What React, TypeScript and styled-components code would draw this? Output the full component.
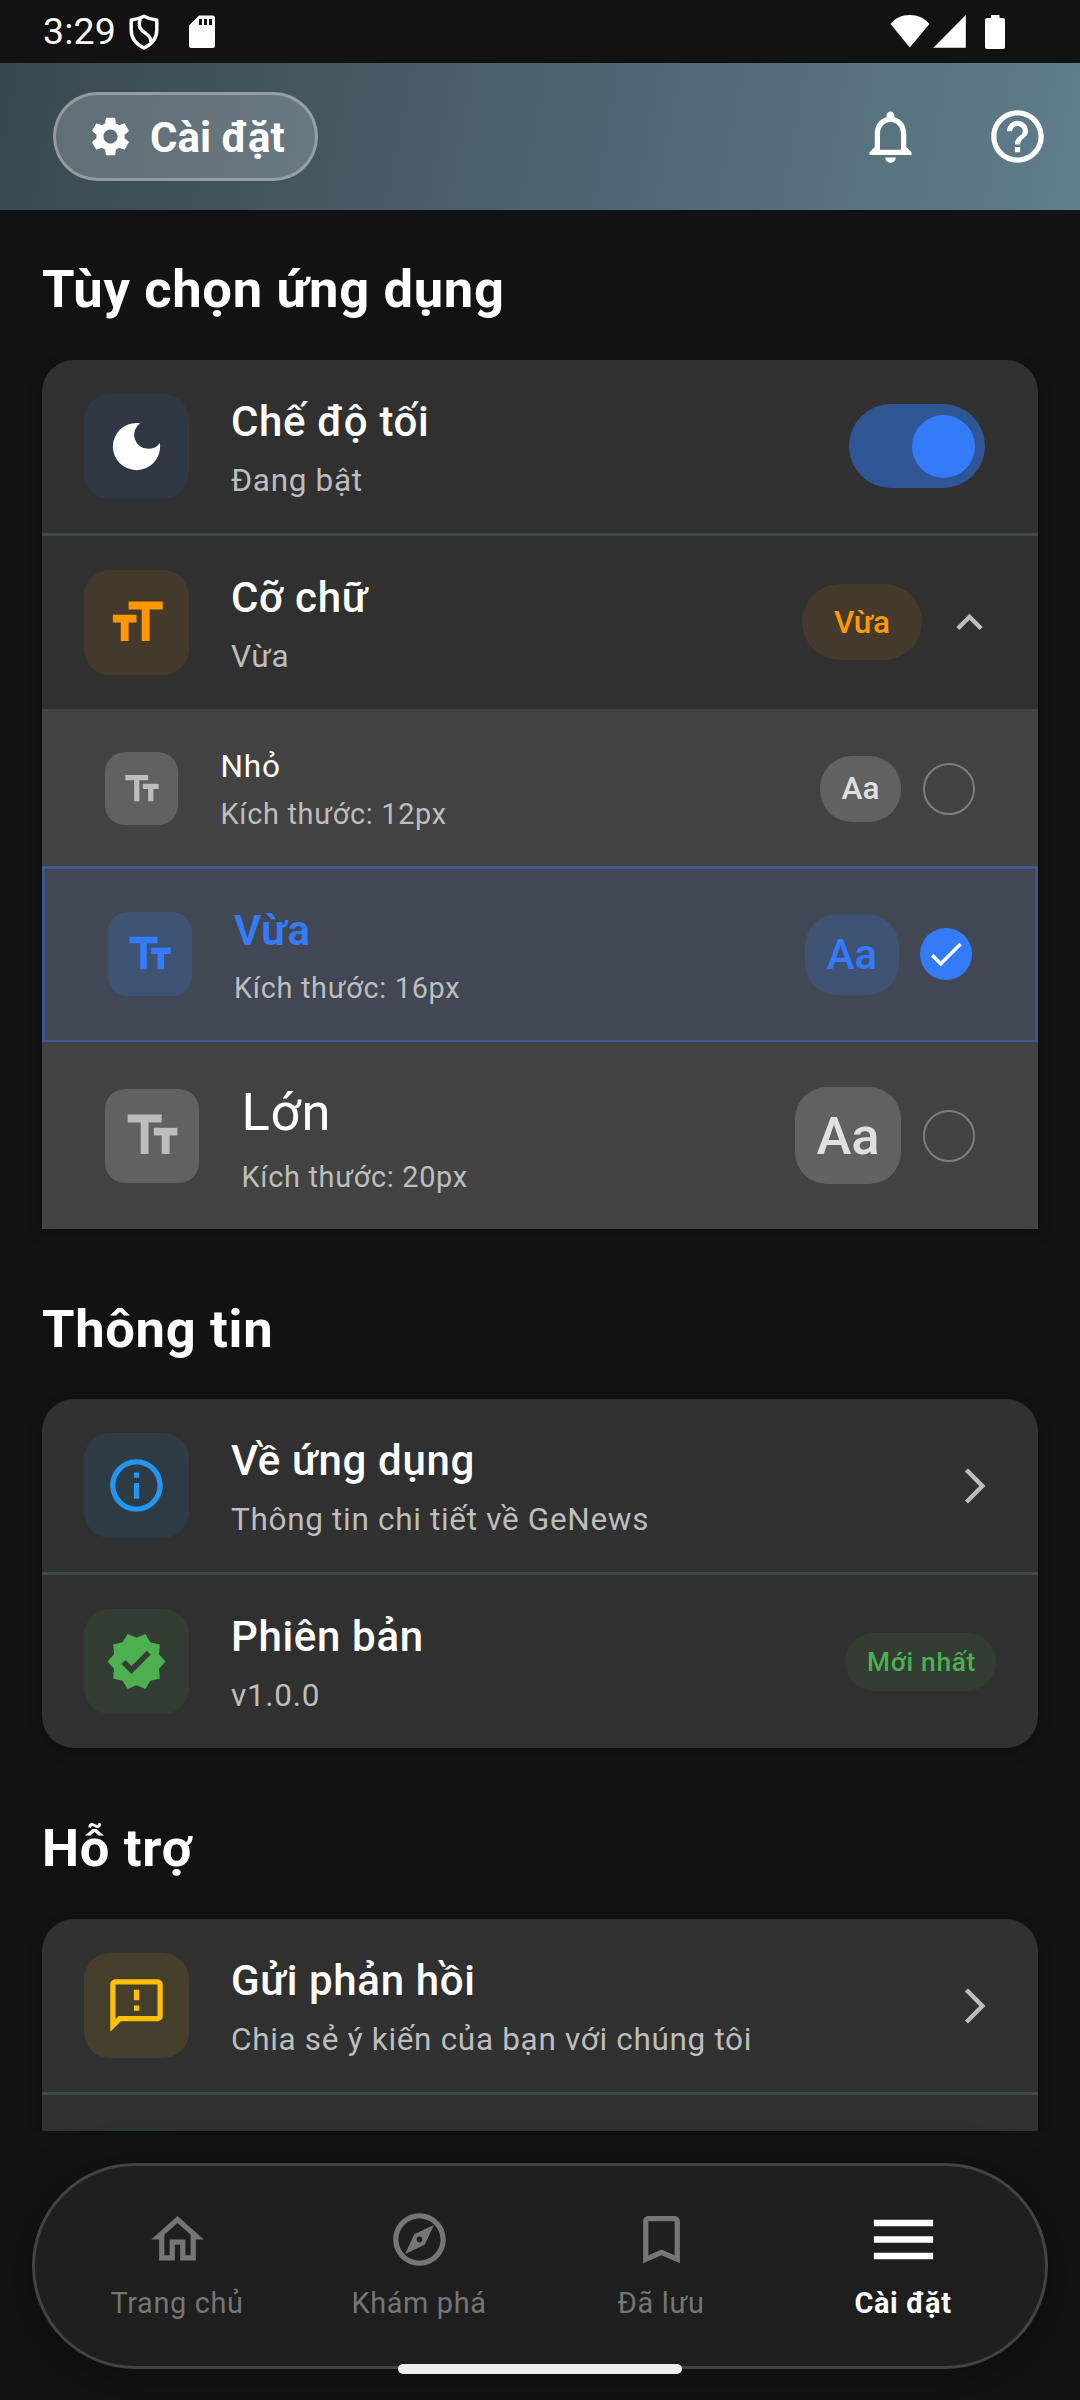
import React from "react";
import styled, { createGlobalStyle } from "styled-components";
import {
  MdSettings,
  MdNotificationsNone,
  MdHelpOutline,
  MdDarkMode,
  MdFormatSize,
  MdTextFields,
  MdKeyboardArrowUp,
  MdInfoOutline,
  MdVerified,
  MdOutlineFeedback,
  MdOutlineHome,
  MdOutlineExplore,
  MdBookmarkBorder,
  MdMenu,
  MdCheck,
} from "react-icons/md";

const GlobalStyle = createGlobalStyle`
  * { box-sizing: border-box; }
  body { margin: 0; background: #121212; }
  svg { display: block; flex: none; }
`;

const Screen = styled.div`
  position: relative;
  display: flex;
  flex-direction: column;
  width: 1080px;
  height: 2400px;
  overflow: hidden;
  background: #121212;
  color: #fff;
  font-family: Roboto, "Noto Sans", sans-serif;
`;

/* ---------- status bar ---------- */

const StatusBar = styled.div`
  display: flex;
  align-items: center;
  justify-content: space-between;
  flex: none;
  height: 63px;
  padding: 0 75px 0 43px;
`;

const StatusGroup = styled.div`
  display: flex;
  align-items: center;
`;

const StatusIcons = styled(StatusGroup)`
  gap: 30px;
`;

const Clock = styled.span`
  width: 86px;
  font-size: 37.5px;
  line-height: 63px;
  letter-spacing: 0.2px;
`;

/* ---------- header ---------- */

const Header = styled.header`
  display: flex;
  align-items: center;
  justify-content: space-between;
  flex: none;
  height: 147px;
  padding: 0 31px 0 53px;
  background: linear-gradient(101deg, #37474f, #607d8b) bottom / 100% 210px;
`;

const HeaderPill = styled.div`
  display: flex;
  align-items: center;
  gap: 16px;
  width: 265px;
  height: 89px;
  padding-left: 31px;
  border: 3px solid rgba(255, 255, 255, 0.3);
  border-radius: 45px;
  background: rgba(255, 255, 255, 0.2);
  font-size: 42px;
  font-weight: 700;
  line-height: 50px;
  white-space: nowrap;
`;

const HeaderLabel = styled.span`
  padding-top: 2px;
`;

const HeaderActions = styled.div`
  display: flex;
  gap: 64px;
`;

/* ---------- content ---------- */

const Content = styled.main`
  flex: none;
  height: 1921px;
  padding: 42px 42px 0;
  overflow: hidden;
`;

const Section = styled.section`
  margin-bottom: 63px;
`;

const SectionTitle = styled.h2<{ $gap?: number }>`
  margin: 0 0 ${(p) => p.$gap ?? 33}px;
  font-size: 52.5px;
  font-weight: 700;
  line-height: 75px;
  letter-spacing: 0.68px;
`;

const Card = styled.div<{ $open?: boolean }>`
  border-radius: ${(p) => (p.$open ? "32px 32px 0 0" : "32px")};
  background: #303030;
  box-shadow: 0 5px 14px rgba(0, 0, 0, 0.25);
`;

const Divider = styled.div<{ $h?: number }>`
  height: ${(p) => p.$h ?? 3}px;
  background: #3e474a;
`;

const Row = styled.div`
  display: flex;
  align-items: center;
  height: 173px;
  padding: 0 42px;
`;

const IconBox = styled.div<{ $bg: string; $fg: string; $size?: number; $radius?: number }>`
  display: flex;
  align-items: center;
  justify-content: center;
  flex: none;
  width: ${(p) => p.$size ?? 105}px;
  height: ${(p) => p.$size ?? 105}px;
  border-radius: ${(p) => p.$radius ?? 26}px;
  background: ${(p) => p.$bg};
  color: ${(p) => p.$fg};
`;

const Texts = styled.div<{ $gap?: number; $shift?: number; $indent?: number }>`
  display: flex;
  flex-direction: column;
  flex: 1;
  gap: ${(p) => p.$gap ?? 6}px;
  margin-left: ${(p) => p.$indent ?? 42}px;
  padding-top: ${(p) => p.$shift ?? 0}px;
  white-space: nowrap;
`;

const RowTitle = styled.div`
  font-size: 42px;
  font-weight: 500;
  line-height: 60px;
  letter-spacing: 0.66px;
`;

const RowSub = styled.div`
  color: #bdbdbd;
  font-size: 31.5px;
  line-height: 45px;
  letter-spacing: 0.68px;
`;

const Switch = styled.div`
  display: flex;
  align-items: center;
  justify-content: flex-end;
  width: 136px;
  height: 84px;
  margin: 0 11px 1px 0;
  padding-right: 10px;
  border-radius: 42px;
  background: #305595;
`;

const Thumb = styled.div`
  width: 63px;
  height: 63px;
  border-radius: 50%;
  background: #347bfa;
`;

const SizeChip = styled.div`
  display: flex;
  align-items: center;
  justify-content: center;
  width: 120px;
  height: 76px;
  margin: 0 21px 1px 0;
  padding-top: 1px;
  border-radius: 38px;
  background: #443a2b;
  color: #ff9800;
  font-size: 31.5px;
  font-weight: 500;
`;

const VersionChip = styled.div`
  display: flex;
  align-items: center;
  justify-content: center;
  width: 151px;
  height: 58px;
  padding: 1px 0 0 2px;
  border-radius: 29px;
  background: #333c33;
  color: #4caf50;
  font-size: 26.25px;
  font-weight: 500;
  letter-spacing: 0.68px;
  white-space: nowrap;
`;

/* ---------- font size options ---------- */

const Option = styled.div<{ $h: number; $selected?: boolean }>`
  display: flex;
  align-items: center;
  height: ${(p) => p.$h}px;
  padding: 0 63px ${(p) => (p.$selected ? 1 : 0)}px;
  background: ${(p) => (p.$selected ? "#414854" : "#424242")};
  border: solid #3c588f;
  border-width: ${(p) => (p.$selected ? "3px 3px 2px" : "0")};
`;

const OptionTitle = styled.div<{ $size: number; $lh: number; $selected?: boolean }>`
  color: ${(p) => (p.$selected ? "#347bfa" : "#fff")};
  font-size: ${(p) => p.$size}px;
  font-weight: ${(p) => (p.$selected ? 600 : 400)};
  line-height: ${(p) => p.$lh}px;
  letter-spacing: ${(p) => (p.$selected ? 0.6 : 0.8)}px;
`;

const OptionSub = styled.div`
  color: #bdbdbd;
  font-size: 28.875px;
  line-height: 41px;
  letter-spacing: 0.7px;
`;

const Sample = styled.div<{ $size: number; $w: number; $h: number; $selected?: boolean }>`
  display: flex;
  align-items: center;
  justify-content: center;
  width: ${(p) => p.$w}px;
  height: ${(p) => p.$h}px;
  margin-right: ${(p) => (p.$selected ? 21 : 22)}px;
  border-radius: 32px;
  background: ${(p) => (p.$selected ? "#3e5274" : "#616161")};
  color: ${(p) => (p.$selected ? "#347bfa" : "#e0e0e0")};
  font-size: ${(p) => p.$size}px;
  font-weight: 500;
`;

const Radio = styled.div<{ $selected?: boolean }>`
  display: flex;
  align-items: center;
  justify-content: center;
  width: 52px;
  height: 52px;
  border: ${(p) => (p.$selected ? "none" : "2px solid #7d7d7d")};
  border-radius: 50%;
  background: ${(p) => (p.$selected ? "#347bfa" : "transparent")};
`;

/* ---------- bottom navigation ---------- */

const NavBar = styled.nav`
  display: flex;
  flex: none;
  width: 1016px;
  height: 206px;
  margin: 32px 32px 0;
  padding: 0 21px;
  border: 3px solid #424242;
  border-radius: 103px;
  background: #1e1e1e;
  box-shadow: 0 10px 52px rgba(0, 0, 0, 0.3);
`;

const NavItem = styled.div<{ $active?: boolean }>`
  display: flex;
  flex-direction: column;
  align-items: center;
  flex: 1;
  padding-top: 34px;
  color: ${(p) => (p.$active ? "#fff" : "#757575")};
  font-size: 28.875px;
  font-weight: ${(p) => (p.$active ? 700 : 400)};
  line-height: 40px;
  letter-spacing: 0.66px;
  white-space: nowrap;
`;

const NavIcon = styled.div`
  display: flex;
  align-items: center;
  justify-content: center;
  height: 79px;
  margin-bottom: 4px;
`;

const HomeIndicator = styled.div`
  position: absolute;
  left: 398px;
  bottom: 26px;
  width: 284px;
  height: 10px;
  border-radius: 5px;
  background: #efefef;
`;

const ShieldIcon = () => (
  <svg width="30" height="36" viewBox="0 0 30 36" fill="none" stroke="#fff" strokeWidth="3.4" strokeLinejoin="round">
    <path d="M15 2.2 C11 4.4 6.5 5.6 2.2 6 V16 C2.2 24 7.5 30.4 15 34 C22.5 30.4 27.8 24 27.8 16 V6 C23.5 5.6 19 4.4 15 2.2 Z" />
    <path d="M11.5 4 C9.5 9.5 9.6 13.4 13 16.4 L18.6 21 C21.4 23.4 22.2 25.4 21.8 28.6" />
  </svg>
);

const SdCardIcon = () => (
  <svg width="26" height="34" viewBox="0 0 26 34">
    <path
      fill="#fff"
      fillRule="evenodd"
      d="M10 0.5 H23.5 A2.5 2.5 0 0 1 26 3 V30.5 A2.5 2.5 0 0 1 23.5 33 H2.5 A2.5 2.5 0 0 1 0 30.5 V10.5 Z M10 4 V10 H13 V4 Z M15 4 V10 H18 V4 Z M20 4 V10 H23 V4 Z"
    />
  </svg>
);

const SignalIcons = () => (
  <svg width="115" height="34" viewBox="0 0 115 34" fill="#fff">
    <path d="M0.5 9 C5 3 12 0 19.8 0 C27.6 0 34.6 3 39.4 9 L19.8 32.6 Z" />
    <path d="M75.8 0 V32.8 H43.4 Z" />
    <path d="M101 0 H109.500 V3 H113 A2 2 0 0 1 115 5 V32 A2 2 0 0 1 113 34 H97 A2 2 0 0 1 95 32 V5 A2 2 0 0 1 97 3 H101 Z" />
  </svg>
);

const ArrowForward = () => (
  <svg width="42" height="42" viewBox="0 0 24 24" fill="#bdbdbd">
    <path d="M6.23 20.23 8 22l10-10L8 2 6.23 3.77 14.46 12z" />
  </svg>
);

type FontOption = {
  label: string;
  px: number;
  height: number;
  box: number;
  icon: number;
  size: number;
  lh: number;
  gap: number;
  sampleW: number;
  sampleH: number;
  shift: number;
  selected?: boolean;
};

const fontOptions: FontOption[] = [
  { label: "Nhỏ", px: 12, height: 155, box: 73, icon: 42, size: 31.5, lh: 45, gap: 5, sampleW: 81, sampleH: 66, shift: 2 },
  { label: "Vừa", px: 16, height: 176, box: 84, icon: 52, size: 42, lh: 62, gap: 6, sampleW: 94, sampleH: 81, shift: 1, selected: true },
  { label: "Lớn", px: 20, height: 187, box: 94, icon: 63, size: 52.5, lh: 76, gap: 7, sampleW: 106, sampleH: 97, shift: 0 },
];

const FontOptionRow = ({ o }: { o: FontOption }) => (
  <Option $h={o.height} $selected={o.selected}>
    <IconBox
      $size={o.box}
      $radius={20}
      $bg={o.selected ? "#3e5274" : "#616161"}
      $fg={o.selected ? "#347bfa" : "#bdbdbd"}
    >
      <MdTextFields size={o.icon} />
    </IconBox>
    <Texts $gap={o.gap} $shift={o.shift} $indent={o.selected ? 42 : 42.5}>
      <OptionTitle $size={o.size} $lh={o.lh} $selected={o.selected}>
        {o.label}
      </OptionTitle>
      <OptionSub>Kích thước: {o.px}px</OptionSub>
    </Texts>
    <Sample $size={o.size} $w={o.sampleW} $h={o.sampleH} $selected={o.selected}>
      Aa
    </Sample>
    <Radio $selected={o.selected}>{o.selected && <MdCheck size={42} />}</Radio>
  </Option>
);

type RowProps = {
  icon: React.ReactNode;
  bg: string;
  fg: string;
  title: string;
  sub: string;
  children?: React.ReactNode;
};

const SettingRow = ({ icon, bg, fg, title, sub, children }: RowProps) => (
  <Row>
    <IconBox $bg={bg} $fg={fg}>
      {icon}
    </IconBox>
    <Texts $shift={2}>
      <RowTitle>{title}</RowTitle>
      <RowSub>{sub}</RowSub>
    </Texts>
    {children}
  </Row>
);

const LastRow = styled.div`
  padding: 34px 42px;
`;

export default function App() {
  return (
    <Screen>
      <GlobalStyle />
      <StatusBar>
        <StatusGroup>
          <Clock>3:29</Clock>
          <StatusIcons>
            <ShieldIcon />
            <SdCardIcon />
          </StatusIcons>
        </StatusGroup>
        <SignalIcons />
      </StatusBar>

      <Header>
        <HeaderPill>
          <MdSettings size={47} />
          <HeaderLabel>Cài đặt</HeaderLabel>
        </HeaderPill>
        <HeaderActions>
          <MdNotificationsNone size={63} />
          <MdHelpOutline size={63} />
        </HeaderActions>
      </Header>

      <Content>
        <Section>
          <SectionTitle>Tùy chọn ứng dụng</SectionTitle>
          <Card $open>
            <SettingRow icon={<MdDarkMode size={63} />} bg="#303744" fg="#fff" title="Chế độ tối" sub="Đang bật">
              <Switch>
                <Thumb />
              </Switch>
            </SettingRow>
            <Divider />
            <SettingRow icon={<MdFormatSize size={63} />} bg="#443a2b" fg="#ff9800" title="Cỡ chữ" sub="Vừa">
              <SizeChip>Vừa</SizeChip>
              <MdKeyboardArrowUp size={53} color="#bdbdbd" />
            </SettingRow>
            <Divider $h={2} />
            {fontOptions.map((o) => (
              <FontOptionRow key={o.px} o={o} />
            ))}
          </Card>
        </Section>

        <Section>
          <SectionTitle $gap={32}>Thông tin</SectionTitle>
          <Card>
            <SettingRow
              icon={<MdInfoOutline size={63} />}
              bg="#2e3a44"
              fg="#2196f3"
              title="Về ứng dụng"
              sub="Thông tin chi tiết về GeNews"
            >
              <ArrowForward />
            </SettingRow>
            <Divider />
            <SettingRow icon={<MdVerified size={63} />} bg="#333c33" fg="#4caf50" title="Phiên bản" sub="v1.0.0">
              <VersionChip>Mới nhất</VersionChip>
            </SettingRow>
          </Card>
        </Section>

        <Section>
          <SectionTitle>Hỗ trợ</SectionTitle>
          <Card>
            <SettingRow
              icon={<MdOutlineFeedback size={63} />}
              bg="#453e2b"
              fg="#ffc107"
              title="Gửi phản hồi"
              sub="Chia sẻ ý kiến của bạn với chúng tôi"
            >
              <ArrowForward />
            </SettingRow>
            <Divider />
            <LastRow>
              <IconBox $bg="#2b3a39" $fg="#009688" />
            </LastRow>
          </Card>
        </Section>
      </Content>

      <NavBar>
        <NavItem>
          <NavIcon>
            <MdOutlineHome size={63} />
          </NavIcon>
          Trang chủ
        </NavItem>
        <NavItem>
          <NavIcon>
            <MdOutlineExplore size={63} />
          </NavIcon>
          Khám phá
        </NavItem>
        <NavItem>
          <NavIcon>
            <MdBookmarkBorder size={63} />
          </NavIcon>
          Đã lưu
        </NavItem>
        <NavItem $active>
          <NavIcon>
            <MdMenu size={79} />
          </NavIcon>
          Cài đặt
        </NavItem>
      </NavBar>
      <HomeIndicator />
    </Screen>
  );
}
